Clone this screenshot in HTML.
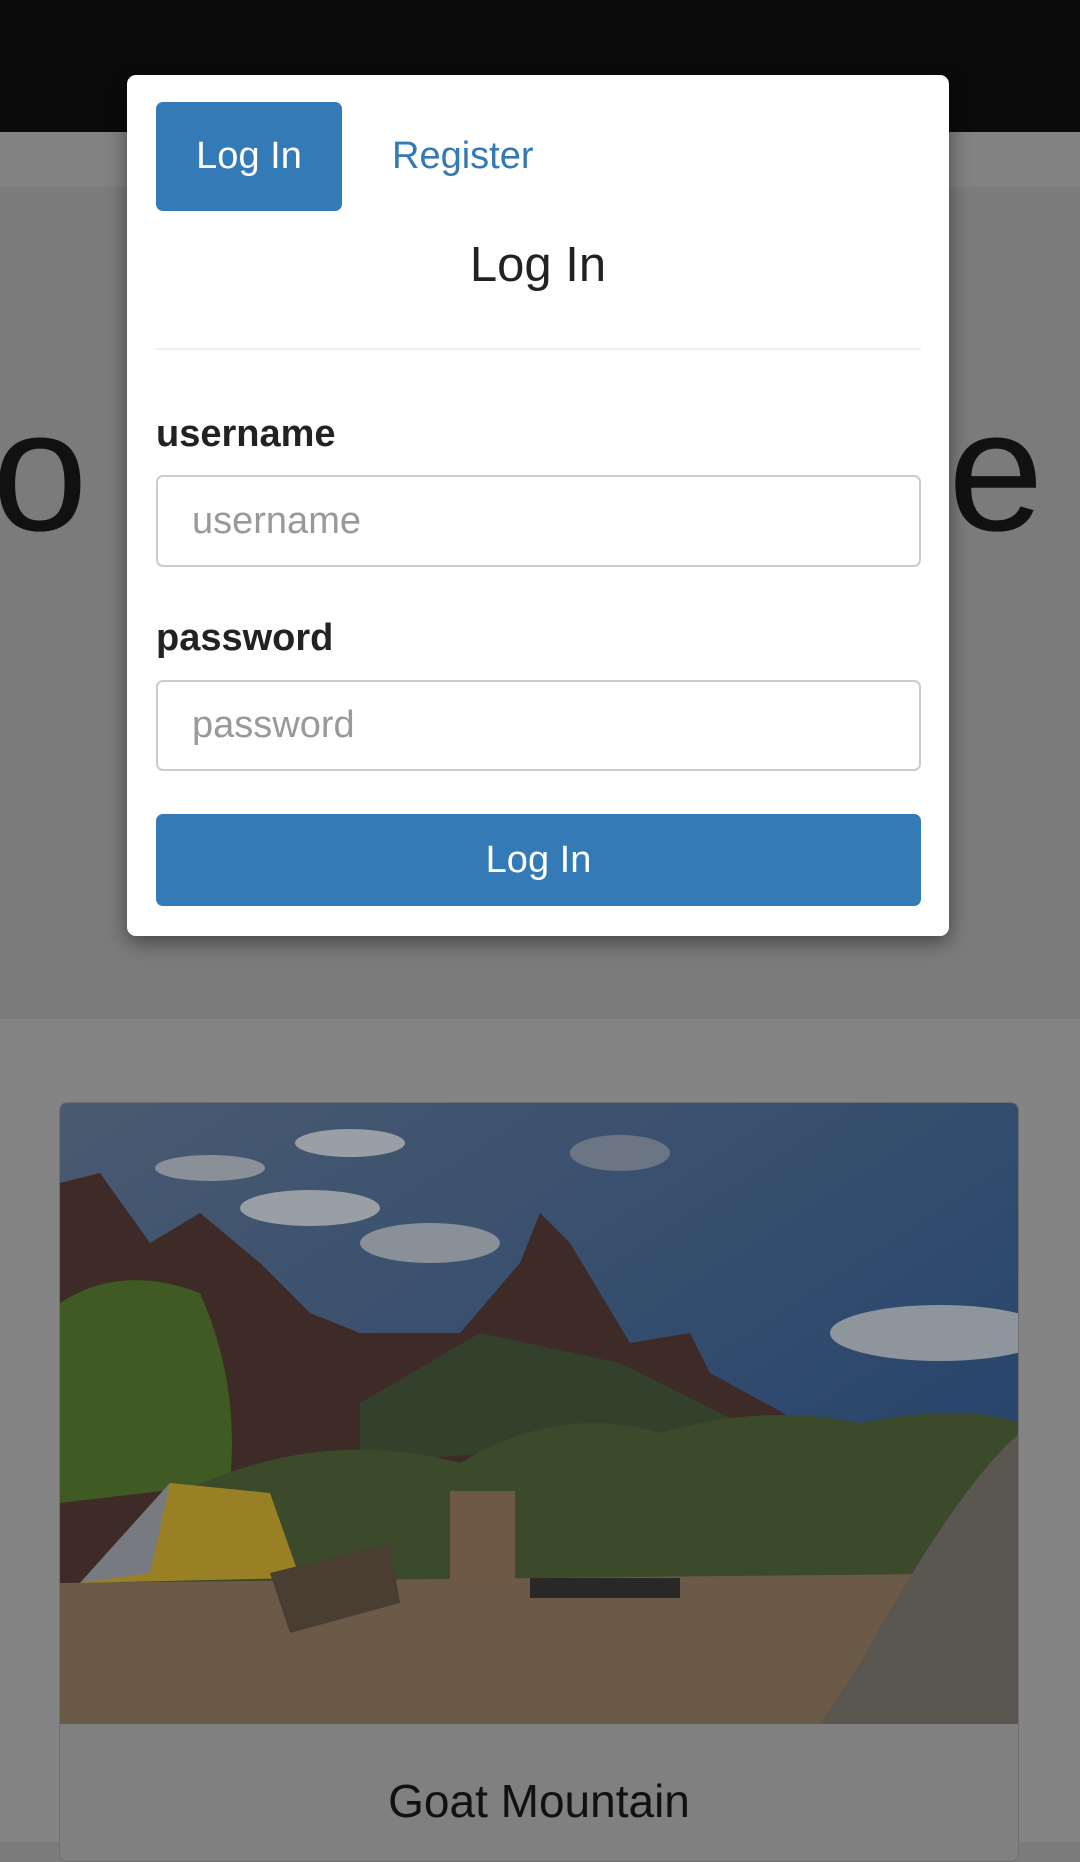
<!DOCTYPE html>
<html><head><meta charset="utf-8"><style>
*{margin:0;padding:0;box-sizing:border-box}
body{width:1080px;height:1842px;overflow:hidden;background:#7b7b7b;font-family:"Liberation Sans",Arial,sans-serif;position:relative}
.abs{position:absolute}
</style></head><body>
<div class="abs" style="left:0;top:0;width:1080px;height:132px;background:#0b0b0b"></div>
<div class="abs" style="left:0;top:132px;width:1080px;height:55px;background:#828282"></div>
<div class="abs" style="left:0;top:1019px;width:1080px;height:823px;background:#848484"></div>
<div class="abs" style="left:-8px;top:385px;font-size:172px;color:#111;line-height:1">o</div>
<div class="abs" style="left:948px;top:385px;font-size:172px;color:#111;line-height:1">e</div>

<div class="abs" style="left:59px;top:1102px;width:960px;height:760px;border:1px solid #6f6f6f;border-radius:8px;background:#808080;overflow:hidden">
<svg width="960" height="621" viewBox="0 0 960 621" style="display:block">
<defs><linearGradient id="sky" x1="0" y1="0" x2="1" y2="1"><stop offset="0" stop-color="#4a5a70"/><stop offset="0.6" stop-color="#2f4a6e"/><stop offset="1" stop-color="#1f3c66"/></linearGradient></defs>
<rect width="960" height="621" fill="url(#sky)"/>
<ellipse cx="290" cy="40" rx="55" ry="14" fill="#9a9fa6"/>
<ellipse cx="150" cy="65" rx="55" ry="13" fill="#8a9098"/>
<ellipse cx="250" cy="105" rx="70" ry="18" fill="#9a9fa6"/>
<ellipse cx="370" cy="140" rx="70" ry="20" fill="#8a9098"/>
<ellipse cx="880" cy="230" rx="110" ry="28" fill="#8f959c"/>
<ellipse cx="560" cy="50" rx="50" ry="18" fill="#6c7584"/>
<polygon points="0,80 40,70 90,140 140,110 200,160 250,210 300,230 400,230 460,160 480,110 510,140 570,240 630,230 650,270 760,330 960,330 960,621 0,621" fill="#3e2a26"/>
<polygon points="300,300 420,230 560,260 700,330 300,360" fill="#33402c"/>
<path d="M0,200 Q60,160 140,190 Q180,280 170,380 L0,400Z" fill="#3f5a22"/>
<path d="M100,400 Q250,320 400,360 Q500,300 600,330 Q700,300 800,320 Q900,300 960,320 L960,500 L0,500Z" fill="#3a4a2a"/>
<path d="M0,480 L960,470 L960,621 L0,621Z" fill="#6b5a48"/>
<polygon points="20,480 110,380 210,390 240,475" fill="#9a8024"/>
<polygon points="20,480 110,380 90,470" fill="#777a80"/>
<rect x="390" y="388" width="65" height="98" fill="#6e5a44"/>
<polygon points="210,470 330,440 340,500 230,530" fill="#4a3e32"/>
<path d="M960,330 Q900,380 800,560 L760,621 L960,621Z" fill="#5a5650"/>
<rect x="470" y="475" width="150" height="20" fill="#2a2826"/>
</svg>
<div style="text-align:center;font-size:46px;color:#111;margin-top:50px">Goat Mountain</div>
</div>

<div class="abs" style="left:127px;top:75px;width:822px;height:861px;background:#fff;border-radius:9px;box-shadow:0 6px 20px rgba(0,0,0,.45)"></div>
<div class="abs" style="left:156px;top:102px;width:186px;height:109px;background:#337ab7;border-radius:7px;color:#fff;font-size:38px;text-align:center;line-height:109px">Log In</div>
<div class="abs" style="left:392px;top:102px;height:109px;line-height:109px;color:#337ab7;font-size:38px">Register</div>
<div class="abs" style="left:127px;top:238px;width:822px;text-align:center;font-size:49px;color:#222;line-height:54px">Log In</div>
<div class="abs" style="left:156px;top:348px;width:765px;height:2px;background:#eee"></div>
<div class="abs" style="left:156px;top:412px;font-size:38px;font-weight:bold;color:#222;line-height:44px">username</div>
<div class="abs" style="left:156px;top:475px;width:765px;height:92px;border:2px solid #ccc;border-radius:7px;font-size:38px;color:#999;padding-left:34px;line-height:88px">username</div>
<div class="abs" style="left:156px;top:616px;font-size:38px;font-weight:bold;color:#222;line-height:44px">password</div>
<div class="abs" style="left:156px;top:680px;width:765px;height:91px;border:2px solid #ccc;border-radius:7px;font-size:38px;color:#999;padding-left:34px;line-height:87px">password</div>
<div class="abs" style="left:156px;top:814px;width:765px;height:92px;background:#337ab7;border-radius:7px;color:#fff;font-size:38px;text-align:center;line-height:92px">Log In</div>
</body></html>
